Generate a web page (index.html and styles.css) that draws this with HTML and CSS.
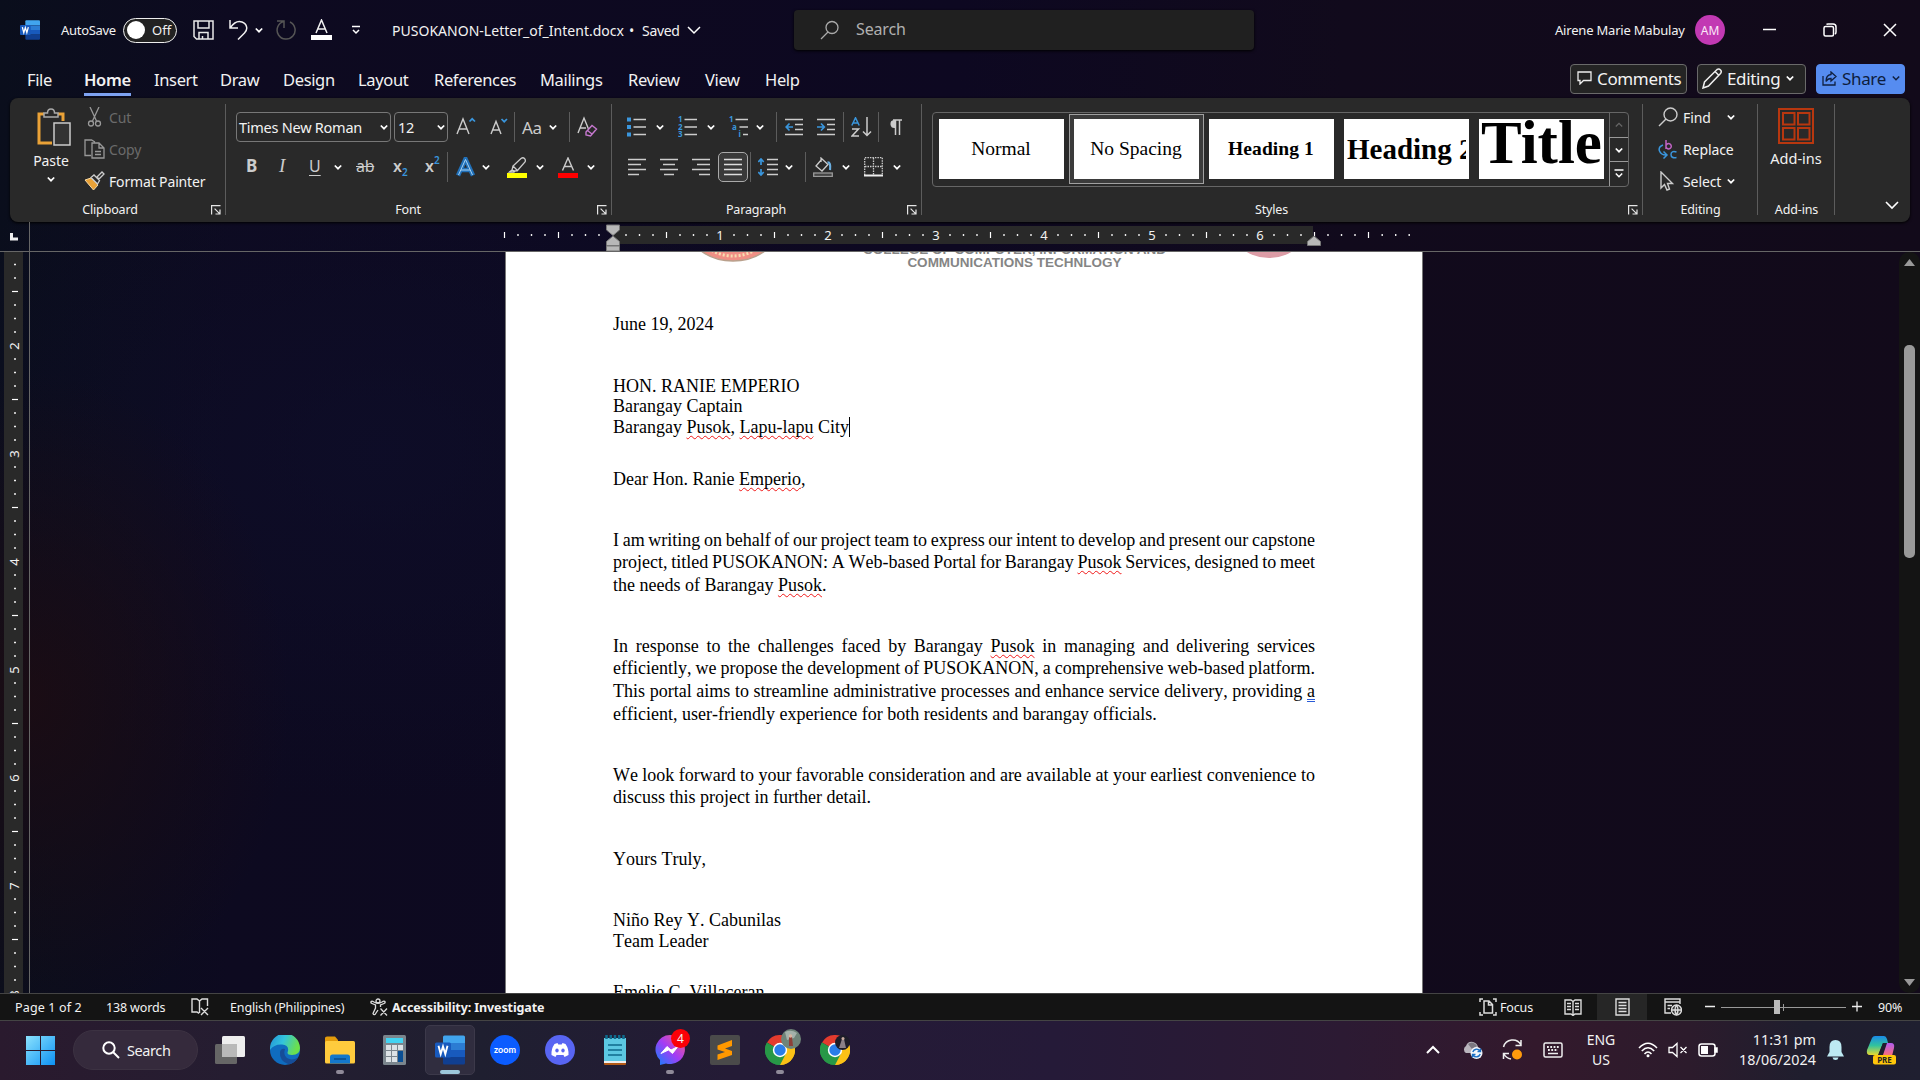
FILE: index.html
```html
<!DOCTYPE html>
<html lang="en">
<head>
<meta charset="utf-8">
<title>PUSOKANON-Letter_of_Intent.docx - Word</title>
<link rel="stylesheet" href="styles.css">
</head>
<body>
<svg width="0" height="0" class="defs">
  <defs>
    <symbol id="chev" viewBox="0 0 10 10"><path d="M1.8 3.5 5 6.700 8.200 3.500" fill="none" stroke="#fff" stroke-width="1.7"/></symbol>
    <symbol id="launch" viewBox="0 0 10 10"><path d="M.6 9.5V.6H9.5M3.6 3.6 8.6 8.6M9 4.5V9H4.5" fill="none" stroke="#e6e6e6" stroke-width="1.2"/></symbol>
    <symbol id="wordlogo" viewBox="0 0 30 30">
      <path d="M8 2a1.5 1.5 0 0 1 1.500-1.500H28.500A1.500 1.500 0 0 1 30 2V8H8z" fill="#41a5ee"/><path d="M8 8H30V15H8z" fill="#2b7cd3"/><path d="M8 15H30V22H8z" fill="#185abd"/><path d="M8 22H30V28a1.500 1.500 0 0 1-1.500 1.500H9.500A1.500 1.500 0 0 1 8 28z" fill="#103f91"/>
      <rect x="0" y="7.500" width="16" height="15" rx="1.500" fill="#185abd"/>
      <path d="M3.500 10.800 5.700 19 8 11.500 10.300 19 12.500 10.800" fill="none" stroke="#fff" stroke-width="1.900"/>
    </symbol>
    <symbol id="chrome" viewBox="0 0 30 30">
      <path d="M15 15 2 7.500A15 15 0 0 1 28 7.500z" fill="#e33b2e"/><path d="M15 15 28 7.500A15 15 0 0 1 15 30z" fill="#fbc116"/><path d="M15 15 15 30A15 15 0 0 1 2 7.500z" fill="#279847"/>
      <path d="M15 8H28.300A15 15 0 0 1 15 30L21 18.500z" fill="#fbc116"/><path d="M2 7.500 8.900 18.500 15 22 21 18.500 15 30A15 15 0 0 1 2 7.500z" fill="#279847"/>
      <circle cx="15" cy="15" r="7.200" fill="#fff"/><circle cx="15" cy="15" r="5.700" fill="#2a7de9"/>
    </symbol>
    <g id="ticks"><path d="M12.800 9h1.400M26.300 9h1.400M39.800 9h1.400M66.800 9h1.400M80.300 9h1.400M93.800 9h1.400" stroke="#eee" stroke-width="2"/><path d="M54 6v6" stroke="#fff" stroke-width="1.200"/></g>
  </defs>
</svg>

<header class="titlebar">
  <div class="quick">
    <svg width="20" height="20"><use href="#wordlogo"/></svg>
    <span class="t13">AutoSave</span>
    <span class="toggle"><i></i>Off</span>
    <svg width="21" height="20" viewBox="0 0 21 20" fill="none" stroke="#e8e8e8" stroke-width="1.500"><path d="M1 1H20V19H3.500L1 16.500zM5 1V8H16V1M6 19V12.500H15V19M9.500 19V16"/></svg>
    <svg width="19" height="20" viewBox="0 0 19 20" fill="none" stroke="#f0f0f0" stroke-width="1.500"><path d="M1 0V8H9M1.500 7.500C5 2.500 9 .5 13 2C18.500 4.200 19 9.500 15.500 13L9 19.500"/></svg>
    <svg width="10" height="10"><use href="#chev"/></svg>
    <svg width="21" height="20" viewBox="0 0 21 20" fill="none" stroke="#555" stroke-width="1.500"><path d="M1 1H8V8M7.500 1.500A9 9 0 1 0 14 2"/></svg>
    <svg width="21" height="22" viewBox="0 0 21 22" fill="none" stroke="#f0f0f0" stroke-width="1.500"><path d="M5 14 10.500 1 16 14M7 10H14"/><path d="M0 18.500H21" stroke="#fff" stroke-width="5"/></svg>
    <svg width="10" height="10" viewBox="0 0 10 10" fill="none" stroke="#fff" stroke-width="1.500"><path d="M1 1.500H9M2 5 5 8 8 5"/></svg>
    <span class="t14 docname">PUSOKANON-Letter_of_Intent.docx</span>
    <span class="t14">•</span>
    <span class="t14 saved">Saved</span>
    <svg width="14" height="10" viewBox="0 0 14 10" fill="none" stroke="#fff" stroke-width="1.500"><path d="M1 2 7 8 13 2"/></svg>
  </div>
  <div class="searchbox">
    <svg width="20" height="20" viewBox="0 0 20 20" fill="none" stroke="#aaa" stroke-width="1.300"><circle cx="12" cy="7.500" r="6"/><path d="M8 12 1 19"/></svg>
    <span>Search</span>
  </div>
  <div class="winctl">
    <span class="user">Airene Marie Mabulay</span>
    <span class="avatar">AM</span>
    <svg width="14" height="14"><path d="M0 6.500H13" stroke="#fff" stroke-width="1.500"/></svg>
    <svg width="14" height="14" viewBox="0 0 14 14" fill="none" stroke="#fff" stroke-width="1.500"><rect x="1" y="3.500" width="9.500" height="9.500" rx="1.500"/><path d="M3.500 1.500Q4 1 5 1H10Q13 1 13 4V9Q13 10.500 12 11"/></svg>
    <svg width="14" height="14" viewBox="0 0 14 14"><path d="M1 1 13 13M13 1 1 13" stroke="#fff" stroke-width="1.500"/></svg>
  </div>
</header>

<nav class="tabs">
  <div class="tablist">
    <span>File</span><span class="active">Home</span><span>Insert</span><span>Draw</span><span>Design</span><span>Layout</span><span>References</span><span>Mailings</span><span>Review</span><span>View</span><span>Help</span>
  </div>
  <div class="tabbtns">
    <span class="tbtn comments"><svg width="15" height="14" viewBox="0 0 15 14" fill="none" stroke="#eee" stroke-width="1.300"><path d="M1 1H14V9.500H6.500L3 13V9.500H1z"/></svg>Comments</span>
    <span class="tbtn editing"><svg width="20" height="21" viewBox="0 0 20 21" fill="none" stroke="#eee" stroke-width="1.500"><path d="M1 20 2.500 14 15 1.500Q17 .5 18.500 2T18.500 5.500L6.500 18zM13 3.500 16.500 7"/></svg>Editing<svg width="10" height="10"><use href="#chev"/></svg></span>
    <span class="tbtn share"><svg width="15" height="15" viewBox="0 0 15 15" fill="none" stroke="#102040" stroke-width="1.300"><path d="M1 5V14H13V10.500M9 1 14 5.500 9 10V7.500Q5.500 7.500 4 10.500Q4 4 9 3.500z"/></svg>Share<svg width="10" height="10" viewBox="0 0 10 10"><path d="M1.800 3.500 5 6.700 8.200 3.500" fill="none" stroke="#102040" stroke-width="1.500"/></svg></span>
  </div>
</nav>

<section class="ribbon">
  <div class="group g-clip">
    <div class="clip">
      <div class="paste">
        <svg width="34" height="38" viewBox="0 0 34 38" fill="none"><path d="M7 6H2V35H15M21 6H26V13" stroke="#eaa237" stroke-width="3"/><path d="M7 9V5H10.500Q10.500 1 14 1T17.500 5H21V9z" stroke="#aaa" stroke-width="1.500" fill="#292929"/><rect x="17" y="15" width="16" height="22" stroke="#ccc" stroke-width="1.500" fill="#333"/></svg>
        <span class="t14">Paste</span>
        <svg width="10" height="10"><use href="#chev"/></svg>
      </div>
      <div class="cliprows">
        <div class="dim"><svg width="21" height="20" viewBox="0 0 21 20" fill="none" stroke="#999" stroke-width="1.300"><path d="M6 0 12.500 14M15 0 8.500 14"/><circle cx="7" cy="16.500" r="2.500"/><circle cx="14" cy="16.500" r="2.500"/></svg>Cut</div>
        <div class="dim"><svg width="21" height="20" viewBox="0 0 21 20" fill="none" stroke="#999" stroke-width="1.300"><path d="M7 16.500H1V1H7.500L11 3M8 4H15L20 9V19H8zM15 4V9H20M11 12.500H17M11 15.500H17"/></svg>Copy</div>
        <div><svg width="21" height="20" viewBox="0 0 21 20" fill="none"><path d="M1 9 7 7 14 14 9.500 19z" fill="#eaa237" stroke="#f6d9a6"/><path d="M7 6.500 10 4 15.500 9.500 13.500 13zM13 6 18 1 20 3 15 8z" stroke="#ccc" stroke-width="1.300" fill="#292929"/></svg>Format Painter</div>
      </div>
    </div>
    <div class="glabel">Clipboard</div><svg class="launch" width="10" height="10"><use href="#launch"/></svg>
  </div>

  <div class="group g-font">
    <div class="row frow1">
      <span class="combo fontname">Times New Roman<svg width="10" height="10"><use href="#chev"/></svg></span>
      <span class="combo">12<svg width="10" height="10"><use href="#chev"/></svg></span>
      <svg width="20" height="20" viewBox="0 0 20 20" fill="none" stroke="#ccc" stroke-width="1.400"><path d="M1 17 7 2 13 17M3 12H11"/><path d="M13.500 4.500 16.200 1.800 19 4.500" stroke="#3a96dd" stroke-width="1.700"/></svg>
      <svg width="20" height="20" viewBox="0 0 20 20" fill="none" stroke="#ccc" stroke-width="1.400"><path d="M1 17 6 4.500 11 17M2.700 13H9.300"/><path d="M11.500 2 14.200 4.700 17 2" stroke="#3a96dd" stroke-width="1.700"/></svg>
      <i class="sep"></i>
      <span class="aa">Aa</span>
      <svg width="10" height="10"><use href="#chev"/></svg>
      <i class="sep"></i>
      <svg width="21" height="22" viewBox="0 0 21 22" fill="none" stroke="#ccc" stroke-width="1.400"><path d="M1 17 7 2 11.500 13M3 12H9"/><path d="M9 16 15 9.500 19.500 13 13.500 20 9 19zM10.500 14.500 15 18" stroke="#c678cf"/></svg>
    </div>
    <div class="row frow2">
      <b class="lt">B</b><em class="lt serif">I</em><span class="lt und">U</span>
      <svg width="10" height="10"><use href="#chev"/></svg>
      <s class="lt strike">ab</s>
      <span class="lt sx">x<sub>2</sub></span><span class="lt sx">x<sup>2</sup></span>
      <i class="sep"></i>
      <svg width="20" height="20" viewBox="0 0 20 20" fill="none"><path d="M2 18.500 9.500 2 17 18.500M5 13H14" stroke="#2170b8" stroke-width="4.500"/><path d="M2.500 18 9.500 2.500 16.500 18M5 13H14" stroke="#a8d4f5" stroke-width="1"/></svg>
      <svg width="10" height="10"><use href="#chev"/></svg>
      <svg width="20" height="21" viewBox="0 0 20 21" fill="none"><path d="M5 13 2.500 15H7L8 14M6 9 10.500 13.500 18 5Q19 3 17.500 1.500T14 1.500zM6 9 5 13 8 14 10.500 13.500" stroke="#ccc" stroke-width="1.300"/><path d="M0 18.500H20" stroke="#ff0" stroke-width="5"/></svg>
      <svg width="10" height="10"><use href="#chev"/></svg>
      <svg width="20" height="21" viewBox="0 0 20 21" fill="none"><path d="M4.500 13.500 10 1 15.500 13.500M6.500 9.500H13.500" stroke="#ccc" stroke-width="1.400"/><path d="M0 18.500H20" stroke="red" stroke-width="5"/></svg>
      <svg width="10" height="10"><use href="#chev"/></svg>
    </div>
    <div class="glabel">Font</div><svg class="launch" width="10" height="10"><use href="#launch"/></svg>
  </div>

  <div class="group g-para">
    <div class="row prow1">
      <svg width="20" height="20" viewBox="0 0 20 20"><path d="M0 2.500H4M0 10H4M0 17.500H4" stroke="#3a96dd" stroke-width="4"/><path d="M6.500 2.500H19M6.500 10H19M6.500 17.500H19" stroke="#ccc" stroke-width="1.700"/></svg>
      <svg width="10" height="10"><use href="#chev"/></svg>
      <svg width="20" height="22" viewBox="0 0 20 22"><path d="M6.500 3.500H19M6.500 11H19M6.500 18.500H19" stroke="#ccc" stroke-width="1.700"/><g class="nums"><text x="0" y="6">1</text><text x="0" y="13.500">2</text><text x="0" y="21">3</text></g></svg>
      <svg width="10" height="10"><use href="#chev"/></svg>
      <svg width="20" height="22" viewBox="0 0 20 22"><path d="M6.500 3.500H19M10.500 11H19M14 18.500H19" stroke="#ccc" stroke-width="1.700"/><g class="nums"><text x="0" y="6">1</text><text x="3" y="13.500">a</text><text x="9.500" y="21">i</text></g></svg>
      <svg width="10" height="10"><use href="#chev"/></svg>
      <i class="sep"></i>
      <svg width="19" height="18" viewBox="0 0 19 18" fill="none"><path d="M0 1.500H18M10 6.500H18M10 11.500H18M0 16.500H18" stroke="#ccc" stroke-width="1.600"/><path d="M8 9H1.500M4.500 5.500 1.200 9 4.500 12.500" stroke="#3a96dd" stroke-width="1.700"/></svg>
      <svg width="19" height="18" viewBox="0 0 19 18" fill="none"><path d="M0 1.500H18M10 6.500H18M10 11.500H18M0 16.500H18" stroke="#ccc" stroke-width="1.600"/><path d="M0 9H7M4 5.500 7.300 9 4 12.500" stroke="#3a96dd" stroke-width="1.700"/></svg>
      <i class="sep"></i>
      <svg width="21" height="20" viewBox="0 0 21 20" fill="none" stroke-width="1.500"><path d="M.8 8.500 4.500.8 8.200 8.500M2 6H7" stroke="#3a96dd"/><path d="M1 12H7.500L1 19H8M16 0V18.500M12 14.500 16 18.500 20 14.500" stroke="#ccc"/></svg>
      <i class="sep"></i>
      <svg width="14" height="17" viewBox="0 0 14 17"><path d="M6 1V9A4 4 0 0 1 5 1z" fill="#ccc"/><path d="M4 1H13M6.500 1V16M10.500 1V16" stroke="#ccc" stroke-width="1.500" fill="none"/></svg>
    </div>
    <div class="row prow2">
      <svg width="18" height="18"><path d="M0 1.500H18M0 6.500H13M0 11.500H18M0 16.500H11" stroke="#ccc" stroke-width="1.600"/></svg>
      <svg width="18" height="18"><path d="M0 1.500H18M3 6.500H15M0 11.500H18M4 16.500H14" stroke="#ccc" stroke-width="1.600"/></svg>
      <svg width="18" height="18"><path d="M0 1.500H18M5 6.500H18M0 11.500H18M7 16.500H18" stroke="#ccc" stroke-width="1.600"/></svg>
      <span class="pressed"><svg width="18" height="18"><path d="M0 1.500H18M0 6.500H18M0 11.500H18M0 16.500H18" stroke="#ddd" stroke-width="1.600"/></svg></span>
      <i class="sep"></i>
      <svg width="20" height="18" viewBox="0 0 20 18" fill="none"><path d="M3 1V7M3 11V17M.3 4 3 1 5.700 4M.3 14 3 17 5.700 14" stroke="#3a96dd" stroke-width="1.700"/><path d="M9 1.500H20M9 6.500H20M9 11.500H20M9 16.500H20" stroke="#ccc" stroke-width="1.600"/></svg>
      <svg width="10" height="10"><use href="#chev"/></svg>
      <i class="sep"></i>
      <svg width="20" height="20" viewBox="0 0 20 20" fill="none" stroke="#ccc" stroke-width="1.300"><path d="M9 2 3 9 9 14 15 7.500 8 1V5"/><path d="M14.500 5.500Q18 5 17 13" stroke="#6aaee0" stroke-width="2.200"/><rect x=".7" y="16" width="18.600" height="3.500" fill="#444" stroke="#999"/></svg>
      <svg width="10" height="10"><use href="#chev"/></svg>
      <svg width="19" height="20" viewBox="0 0 19 20" fill="none" stroke="#ccc" stroke-width="1.300"><path d="M.7 18V.7H18.300V18M9.500 1V18M1 9.500H18" stroke-dasharray="1.500 1"/><path d="M0 18.500H19" stroke="#eee" stroke-width="2"/></svg>
      <svg width="10" height="10"><use href="#chev"/></svg>
    </div>
    <div class="glabel">Paragraph</div><svg class="launch" width="10" height="10"><use href="#launch"/></svg>
  </div>

  <div class="group g-styles">
    <div class="gallery">
      <div class="tiles">
        <div class="cell"><div class="tile">Normal</div></div>
        <div class="cell sel"><div class="tile">No Spacing</div></div>
        <div class="cell"><div class="tile h1">Heading 1</div></div>
        <div class="cell"><div class="tile h2">Heading 2</div></div>
        <div class="cell"><div class="tile ttl">Title</div></div>
      </div>
      <div class="scroller">
        <span><svg width="10" height="10" viewBox="0 0 10 10"><path d="M1.800 6.500 5 3.300 8.200 6.500" fill="none" stroke="#666" stroke-width="1.300"/></svg></span>
        <span><svg width="10" height="10"><use href="#chev"/></svg></span>
        <span><svg width="10" height="10" viewBox="0 0 10 10"><path d="M.5 1H9.500M1.800 4.500 5 7.700 8.200 4.500" fill="none" stroke="#fff" stroke-width="1.500"/></svg></span>
      </div>
    </div>
    <div class="glabel">Styles</div><svg class="launch" width="10" height="10"><use href="#launch"/></svg>
  </div>

  <div class="group g-edit">
    <div class="editrows">
      <div><svg width="20" height="20" viewBox="0 0 20 20" fill="none" stroke="#ccc" stroke-width="1.400"><circle cx="12.500" cy="7.500" r="6.500"/><path d="M8 12 1 19"/></svg><span>Find</span><svg class="fch" width="10" height="10"><use href="#chev"/></svg></div>
      <div><svg width="20" height="20" viewBox="0 0 20 20" fill="none" stroke-width="1.500"><path d="M8 1V10M8 6.500A2.700 2.700 0 1 1 8 8" stroke="#c063c5"/><path d="M5 6Q0 8 1.500 12T8 16M5.500 12.500 9 16 5.500 19.500M18.500 13Q13 11.500 13 15.500T18.500 18.500" stroke="#3a96dd"/></svg><span>Replace</span></div>
      <div><svg width="20" height="20" viewBox="0 0 20 20" fill="none" stroke="#ccc" stroke-width="1.400"><path d="M3 1V17L6.500 13.500 9 19 11.500 18 9.500 12.500H14.500z"/></svg><span>Select</span><svg width="10" height="10"><use href="#chev"/></svg></div>
    </div>
    <div class="glabel">Editing</div>
  </div>

  <div class="group g-add">
    <div class="addins"><svg width="36" height="36" viewBox="0 0 36 36" fill="none" stroke="#b8370f" stroke-width="2"><rect x="1" y="1" width="34" height="34"/><rect x="5" y="5" width="11.500" height="11.500"/><rect x="20" y="5" width="11.500" height="11.500"/><rect x="5" y="20" width="11.500" height="11.500"/><rect x="20" y="20" width="11.500" height="11.500"/></svg><span>Add-ins</span></div>
    <div class="glabel">Add-ins</div>
  </div>
  <div class="collapse"><svg width="14" height="10" viewBox="0 0 14 10" fill="none" stroke="#fff" stroke-width="1.600"><path d="M1 2 7 8 13 2"/></svg></div>
</section>

<div class="hruler">
  <svg class="corner" width="30" height="29"><path d="M11.500 12V19.500M10 18H18" transform="translate(0 -1)" stroke="#eee" stroke-width="3" fill="none"/><path d="M29.500 0V29" stroke="#666"/></svg>
  <svg width="1800" height="29" viewBox="30 222 1800 29">
    <rect x="613" y="226" width="700" height="18" fill="#292929"/>
    <path d="M504.500 232v6M1368.500 232v6" stroke="#fff" stroke-width="1.200"/>
    <use href="#ticks" x="504.500" y="226"/><use href="#ticks" x="612.500" y="226"/><use href="#ticks" x="720.500" y="226"/><use href="#ticks" x="828.500" y="226"/><use href="#ticks" x="936.500" y="226"/><use href="#ticks" x="1044.500" y="226"/><use href="#ticks" x="1152.500" y="226"/><use href="#ticks" x="1260.500" y="226"/>
    <path d="M1381.500 235h1.400M1395 235h1.400M1408.500 235h1.400" stroke="#eee" stroke-width="2"/>
    <g class="rnum"><text x="720" y="240">1</text><text x="828" y="240">2</text><text x="936" y="240">3</text><text x="1044" y="240">4</text><text x="1152" y="240">5</text><text x="1260" y="240">6</text></g>
    <g fill="#b8b8b8" stroke="#777"><path d="M606.500 225H619.500V230L613 235.500 606.500 230z"/><path d="M613 236 619.500 241.500V245.500H606.500V241.500z"/><path d="M606.500 246H619.500V251H606.500z"/><path d="M1314 236 1320.500 241.500V245.500H1307.500V241.500z"/></g>
  </svg>
</div>

<main class="work">
  <div class="vruler">
    <svg width="26" height="741" viewBox="0 252 26 741">
      <rect x="4" y="252" width="19" height="741" fill="#292929"/>
      <g transform="translate(6 0)"><use href="#ticks" transform="translate(18 237.500) rotate(90)"/><use href="#ticks" transform="translate(18 345.500) rotate(90)"/><use href="#ticks" transform="translate(18 453.500) rotate(90)"/><use href="#ticks" transform="translate(18 561.500) rotate(90)"/><use href="#ticks" transform="translate(18 669.500) rotate(90)"/><use href="#ticks" transform="translate(18 777.500) rotate(90)"/><use href="#ticks" transform="translate(18 885.500) rotate(90)"/></g>
      <g class="rnum"><text transform="translate(19 346) rotate(-90)">2</text><text transform="translate(19 454) rotate(-90)">3</text><text transform="translate(19 562) rotate(-90)">4</text><text transform="translate(19 670) rotate(-90)">5</text><text transform="translate(19 778) rotate(-90)">6</text><text transform="translate(19 886) rotate(-90)">7</text><text transform="translate(19 994) rotate(-90)">8</text></g>
    </svg>
  </div>
  <div class="canvas">
    <article class="page">
      <div class="letterhead">
        <svg width="84" height="14" viewBox="0 0 84 14"><ellipse cx="42" cy="-27" rx="46" ry="36" fill="#f08f85" stroke="#b9a08c" stroke-width="1.500"/><ellipse cx="42" cy="-32" rx="40" ry="36" fill="none" stroke="#f7dcb0" stroke-width="3" stroke-dasharray="2 2"/></svg>
        <div class="college"><span>COLLEGE OF COMPUTER, INFORMATION AND</span><span>COMMUNICATIONS TECHNLOGY</span></div>
        <svg width="60" height="14" viewBox="0 0 60 14"><circle cx="30" cy="-38" r="44" fill="#dc9ca6"/></svg>
      </div>
      <p class="date">June 19, 2024</p>
      <p class="to">HON. RANIE EMPERIO<br>Barangay Captain<br>Barangay <u>Pusok</u>, <u>Lapu-lapu</u> City<i class="caret"></i></p>
      <p class="dear">Dear Hon. Ranie <u>Emperio</u>,</p>
      <p class="body p1"><span class="j">I am writing on behalf of our project team to express our intent to develop and present our capstone</span><span class="j">project, titled PUSOKANON: A Web-based Portal for Barangay <u>Pusok</u> Services, designed to meet</span><span>the needs of Barangay <u>Pusok</u>.</span></p>
      <p class="body p2"><span class="j">In response to the challenges faced by Barangay <u>Pusok</u> in managing and delivering services</span><span class="j">efficiently, we propose the development of PUSOKANON, a comprehensive web-based platform.</span><span class="j">This portal aims to streamline administrative processes and enhance service delivery, providing <u class="gram">a</u></span><span>efficient, user-friendly experience for both residents and barangay officials.</span></p>
      <p class="body p3"><span class="j">We look forward to your favorable consideration and are available at your earliest convenience to</span><span>discuss this project in further detail.</span></p>
      <p class="yours">Yours Truly,</p>
      <p class="sign">Niño Rey Y. Cabunilas<br>Team Leader</p>
      <p class="sign2">Emelie C. Villaceran</p>
    </article>
  </div>
  <div class="vscroll">
    <svg width="11" height="7"><path d="M5.500 0 11 7H0z" fill="#999"/></svg>
    <i class="thumb"></i>
    <svg width="11" height="7"><path d="M5.500 7 11 0H0z" fill="#999"/></svg>
  </div>
</main>

<footer class="status">
  <div class="sleft">
    <span class="pages">Page 1 of 2</span><span>138 words</span>
    <svg width="18" height="18" viewBox="0 0 18 18" fill="none" stroke="#ddd" stroke-width="1.400"><path d="M8 15.500 6 14H1V1H6L8.500 3 11 1H16.500V8M8.500 3V15M10 10 17 17M17 10 10 17"/></svg>
    <span>English (Philippines)</span>
    <svg width="18" height="18" viewBox="0 0 18 18" fill="none" stroke="#ddd" stroke-width="1.300"><circle cx="8" cy="3" r="2"/><path d="M1 3.500Q.5 5 2 5.500L5.500 7V10L3 15.500Q3.500 17 5 16.500L8 12M15 3.500Q15.500 5 14 5.500L10.500 7V9M1 3.500Q2 2.500 4 4L6.500 5H9.500L12 4Q14 2.500 15 3.500M10.500 10.500 17 17.500M17 10.500 10.500 17.500"/></svg>
    <b>Accessibility: Investigate</b>
  </div>
  <div class="sright">
    <svg width="18" height="18" viewBox="0 0 18 18" fill="none" stroke="#ddd" stroke-width="1.500"><path d="M4 1H1V4M14 1H17V4M1 14V17H4M17 14V17H14M5 3H10L13.500 6.500V15H5zM9.500 3V7H13.500"/></svg>
    <span>Focus</span>
    <svg width="18" height="17" viewBox="0 0 18 17" fill="none" stroke="#ddd" stroke-width="1.400"><path d="M9 2.500 7 1H1V15H7L9 16.500 11 15H17V1H11zM9 2V16M3 4.500H7M3 7.500H7M3 10.500H7M11 4.500H15M11 7.500H15M11 10.500H15"/></svg>
    <span class="on"><svg width="15" height="18" viewBox="0 0 15 18" fill="none" stroke="#ddd" stroke-width="1.400"><path d="M1 1H14V17H1zM3.500 4.500H11.500M3.500 7.500H11.500M3.500 10.500H11.500M3.500 13.500H11.500"/></svg></span>
    <svg width="18" height="18" viewBox="0 0 18 18" fill="none" stroke="#ddd" stroke-width="1.400"><path d="M7 15H1V1H16V6M1 4H16M3.500 7.500H8M3.500 10.500H6"/><circle cx="12.500" cy="12" r="5" fill="#333"/><path d="M7.500 12H17.500M12.500 7Q9.500 12 12.500 17M12.500 7Q15.500 12 12.500 17"/></svg>
    <svg width="158" height="16" viewBox="0 0 158 16" stroke="#eee"><path d="M0 7.500H10M147 7.500H157M152 2.500V12.500" stroke-width="1.300"/><path d="M16 8.500H141M78.500 5V12" stroke="#999"/><path d="M69 1H75V15H69z" stroke="none" fill="#bbb"/></svg>
    <span>90%</span>
  </div>
</footer>

<div class="taskbar">
  <div class="apps">
    <svg width="29" height="30" viewBox="0 0 29 30"><defs><linearGradient id="win" x1="0" y1="0" x2="1" y2="1"><stop offset="0" stop-color="#8be2fd"/><stop offset="1" stop-color="#0d92f4"/></linearGradient></defs><path d="M0 1H14V15H0zM15 1H29V15H15zM0 16H14V30H0zM15 16H29V30H15z" fill="url(#win)"/></svg>
    <div class="pill"><svg width="18" height="18" viewBox="0 0 18 18" fill="none" stroke="#fff" stroke-width="2"><circle cx="7" cy="7" r="5.700"/><path d="M11 11 17 17"/></svg>Search</div>
    <svg width="30" height="30" viewBox="0 0 30 30"><rect y="9" width="22" height="20" rx="1.500" fill="#666"/><rect x="7" y="1" width="23" height="21" rx="1.500" fill="#eee"/><path d="M7 9H22V22H7z" fill="#b9b9b9"/></svg>
    <svg width="30" height="30" viewBox="0 0 30 30"><defs><linearGradient id="ed" x1="0" y1="0" x2="1" y2=".3"><stop offset="0" stop-color="#2291d8"/><stop offset=".5" stop-color="#33c4dc"/><stop offset="1" stop-color="#6be04c"/></linearGradient></defs><circle cx="15" cy="15" r="15" fill="#0f6cbf"/><path d="M0 14A15 15 0 0 1 30 13Q30 20 22 20 16 20 18 16 19 10 12 9.500 4 9 0 15z" fill="url(#ed)"/><path d="M10 17Q9 26 19 29.500 25 28 28 22.500 22 26 17 23 13 20 15 14 11 13 10 17z" fill="#164d98"/></svg>
    <div class="running"><svg width="30" height="28" viewBox="0 0 30 28"><path d="M0 2Q0 .5 2 .5H10L13 4V8H0z" fill="#e39b0b"/><rect y="5" width="30" height="22.500" rx="1.500" fill="#ffcb3d"/><path d="M5 27.500V21Q5 18.500 7.500 18.500H22.500Q25 18.500 25 21V27.500z" fill="#1478cc"/><path d="M9 23H21" stroke="#0a4d8c" stroke-width="1.500"/></svg></div>
    <svg width="23" height="30" viewBox="0 0 23 30"><rect width="23" height="30" rx="1.500" fill="#7b858d"/><rect x="3" y="3" width="17" height="5" fill="#43d3f2"/><path d="M3 10h5v5H3zM9 10h5v5H9zM15 10h5v5h-5zM3 16h5v5H3zM9 16h5v5H9zM3 22h5v5H3zM9 22h5v5H9z" fill="#dde2e6"/><path d="M15 16h5v11h-5z" fill="#0b4f94"/></svg>
    <div class="wtile"><svg width="30" height="30"><use href="#wordlogo"/></svg></div>
    <svg width="30" height="30" viewBox="0 0 30 30"><circle cx="15" cy="15" r="15" fill="#0b5cff"/><text class="zoomt" x="15" y="18">zoom</text></svg>
    <svg width="30" height="30" viewBox="0 0 30 30"><circle cx="15" cy="15" r="15" fill="#5865f2"/><path d="M9.500 9 12.500 8 13.300 9.500H16.700L17.500 8 20.500 9Q24 14 23.500 20L19.500 22 18.500 20H11.500L10.500 22 6.500 20Q6 14 9.500 9z" fill="#fff"/><ellipse cx="12" cy="15.500" rx="1.700" ry="2" fill="#5865f2"/><ellipse cx="18" cy="15.500" rx="1.700" ry="2" fill="#5865f2"/></svg>
    <svg width="22" height="30" viewBox="0 0 22 30"><rect y="25" width="22" height="5" rx="1" fill="#b35a16"/><path d="M0 24H22V28H0z" fill="#eee"/><path d="M0 3H22V26H0z" fill="#5cc8e2"/><path d="M4 10H18M4 15H18M4 20H18" stroke="#0e6a8c" stroke-width="1.700"/><path d="M2.500 0V4M6.800 0V4M11 0V4M15.200 0V4M19.500 0V4" stroke="#0e6a8c" stroke-width="2.500" stroke-dasharray="4"/></svg>
    <div class="running"><svg width="30" height="30" viewBox="0 0 30 30"><defs><linearGradient id="ms" x1="0" y1="1" x2="1" y2="0"><stop offset="0" stop-color="#0a84ff"/><stop offset=".5" stop-color="#a43cf5"/><stop offset="1" stop-color="#ff5f78"/></linearGradient></defs><path d="M15 0A15 14.500 0 1 1 11 28.500L5 30V25A14.500 14.500 0 0 1 15 0z" fill="url(#ms)"/><path d="M6 18.500 12 11.500 16 15 23 11.500 17.500 18.500 13.500 15z" fill="#fff" stroke="#fff"/></svg><b class="badge">4</b></div>
    <svg width="30" height="30" viewBox="0 0 30 30"><rect width="30" height="30" rx="2" fill="#4a4a4a"/><path d="M7.500 10.500 22 5V11L15 13.500 22 16V20L7.500 25V19.500L15 17 7.500 14.500z" fill="#ff9800"/></svg>
    <div class="running"><svg class="person" width="36" height="30" viewBox="0 0 36 30"><use href="#chrome" width="30" height="30"/><circle cx="26" cy="4" r="10" fill="#6f8479"/><path d="M20 -3Q26 -6 32 -2L29 3 22 5z" fill="#a4b1aa"/><path d="M24 2H27L28 11H24z" fill="#8d4038"/><circle cx="25.500" cy="1" r="1.800" fill="#d8b4a0"/></svg></div>
    <svg class="person" width="30" height="30" viewBox="0 0 30 30"><use href="#chrome" width="30" height="30"/><circle cx="22.500" cy="7.500" r="7.500" fill="#1d1d29"/><path d="M22 4H24L26 13H19z" fill="#8a8087"/><circle cx="23" cy="3.500" r="1.500" fill="#c9aca0"/></svg>
  </div>
  <div class="tray">
    <svg width="14" height="10" viewBox="0 0 14 10" fill="none" stroke="#fff" stroke-width="2"><path d="M1 8 7 2 13 8"/></svg>
    <svg width="21" height="20" viewBox="0 0 21 20"><path d="M4 13A4 4 0 0 1 4 6Q6 1 11 2 15 3 16 7L17 13z" fill="#b9b5bd"/><path d="M6 4Q11 0 15 6L10 9z" fill="#7b7780"/><circle cx="14.500" cy="13" r="6" fill="#f3f6fa"/><path d="M10.800 12A4 4 0 0 1 18 11M18.200 14A4 4 0 0 1 11 15M18.500 8.500V11.500H15.500M10.500 17.500V14.500H13.500" fill="none" stroke="#1a6fc4" stroke-width="1.400"/></svg>
    <svg width="21" height="21" viewBox="0 0 21 21" fill="none" stroke="#eee" stroke-width="1.500"><path d="M1.500 8A9.500 9.500 0 0 1 19 6M19 1V6.500H13.500M9 20Q4 19 2 15M1.500 20V14.500H7"/><circle cx="15" cy="15.500" r="5" fill="#ff9a0d" stroke="none"/></svg>
    <svg width="20" height="16" viewBox="0 0 20 16" fill="none" stroke="#eee" stroke-width="1.500"><rect x="1" y="1" width="18" height="14" rx="1.500"/><path d="M4 5H16M5 8H15" stroke-width="1.800" stroke-dasharray="1.800 1.500"/><path d="M5 11.500H15"/></svg>
    <div class="lang">ENG<br>US</div>
    <svg width="20" height="16" viewBox="0 0 20 16" fill="none" stroke="#fff" stroke-width="1.500"><path d="M1 6Q10 -3.500 19 6M3.800 9Q10 2.500 16.200 9M6.500 12Q10 8 13.500 12"/><circle cx="10" cy="13.800" r="1.500" fill="#fff" stroke="none"/></svg>
    <svg width="20" height="16" viewBox="0 0 20 16" fill="none" stroke="#fff" stroke-width="1.300"><path d="M1 5.500H4.500L9 1.500V14.500L4.500 10.500H1zM12.500 5 18.500 11M18.500 5 12.500 11"/></svg>
    <svg width="21" height="14" viewBox="0 0 21 14" fill="none" stroke="#fff" stroke-width="1.500"><rect x="1" y="1" width="16" height="12" rx="2.500"/><path d="M3 3H10V11H3z" fill="#fff" stroke="none"/><path d="M17 5H19V9H17z" fill="#fff"/></svg>
    <div class="clock">11:31 pm<br>18/06/2024</div>
    <svg width="17" height="20" viewBox="0 0 17 20"><path d="M8.500 0Q14.500 0 14.500 7V12L17 16.500H0L2.500 12V7Q2.500 0 8.500 0zM5.500 17.500H11.500Q11 20 8.500 20T5.500 17.500z" fill="#bdeaf3"/></svg>
    <svg width="30" height="30" viewBox="0 0 30 30"><defs><linearGradient id="c1" x1="0" y1="0" x2="0" y2="1"><stop offset="0" stop-color="#1a8be8"/><stop offset=".5" stop-color="#31c39d"/><stop offset="1" stop-color="#e8d930"/></linearGradient><linearGradient id="c2" x1="0" y1="0" x2="0" y2="1"><stop offset="0" stop-color="#b05cf0"/><stop offset="1" stop-color="#ff6f72"/></linearGradient></defs><path d="M6 3Q7 1 9 1H18Q20 1 21 4L22 8H17L12 20H4Q0 20 1 15z" fill="url(#c1)"/><path d="M18 8H25Q29 8 28 13L26 21H13z" fill="url(#c2)"/><path d="M17 8 12.500 20H17L21 8z" fill="#1f1e2e"/><rect x="7" y="20" width="23" height="9.500" rx="2" fill="#ffc60a"/><text class="pre" x="18.500" y="27.800">PRE</text></svg>
  </div>
</div>
</body>
</html>
```
FILE: styles.css
```css
* { box-sizing: border-box; }
body {
  margin: 0; width: 1920px; height: 1080px; overflow: hidden;
  display: flex; flex-direction: column;
  font-family: "Noto Sans", "Open Sans", sans-serif; font-size: 13px; color: #f2f2f2;
  background:
    radial-gradient(ellipse 260px 330px at 30px 700px, rgba(30, 12, 18, .8), transparent),
    radial-gradient(ellipse 500px 350px at 380px 450px, rgba(14, 14, 42, .7), transparent),
    linear-gradient(90deg, #0a0e1c 0, #0d0a20 12%, #0d0821 50%, #110a1c 70%, #120a1a 100%);
}
svg { display: block; flex: none; }
.defs { position: absolute; }
.t13 { font-size: 13px; letter-spacing: -.3px; }
.t14 { font-size: 14px; letter-spacing: -.3px; }
.docname { letter-spacing: .02px; }

.titlebar { height: 60px; flex: none; display: flex; align-items: center; }
.quick {
  display: grid; align-items: center; width: 794px; padding-left: 20px;
  grid-template-columns: 41px 62px 70px 36px 25px 22px 35px 40px 41px 237px 13px 45px 20px;
}
.quick, .winctl, .searchbox { white-space: nowrap; }
.toggle {
  width: 54px; height: 25px; border: 1.5px solid #eee; border-radius: 13px; background: #222;
  display: flex; align-items: center; font-size: 13px; padding-left: 3px; gap: 7px;
}
.toggle i { width: 18px; height: 18px; border-radius: 50%; background: #fff; }
.searchbox {
  width: 460px; height: 40px; background: #202020; border-radius: 4px; box-shadow: 0 1px 3px #000;
  display: flex; align-items: center; padding-left: 26px; gap: 16px; color: #b0b0b0; font-size: 16px; letter-spacing: -.15px; line-height: 38px;
}
.searchbox span { margin-top: -2px; }
.winctl {
  margin-left: auto; width: 365px; display: grid; align-items: center;
  grid-template-columns: 140px 68px 60px 60px 20px;
}
.user { font-size: 13px; letter-spacing: -.2px; }
.avatar {
  width: 30px; height: 30px; border-radius: 50%; background: #c239b3; color: #fbe8f8;
  display: flex; align-items: center; justify-content: center; font-size: 12px;
}

.tabs { height: 38px; flex: none; display: flex; }
.tablist {
  width: 1570px; padding-left: 27px; display: grid; font-size: 16.500px; letter-spacing: -.35px;
  grid-template-columns: 57px 70px 66px 63px 75px 76px 106px 88px 77px 60px 40px;
}
.tablist span { height: 36px; line-height: 39px; justify-self: start; white-space: nowrap; }
.tablist .active { font-weight: 600; border-bottom: 3px solid #7da2f2; letter-spacing: -.35px; }
.tabbtns { display: flex; gap: 10px; padding-top: 4px; }
.tbtn {
  height: 30px; border: 1px solid #6a6a6a; border-radius: 4px; background: #242424; display: flex; align-items: center;
  font-size: 17px; letter-spacing: -.35px; gap: 5px; padding: 0 0 2px 6px; white-space: nowrap;
}
.comments { width: 117px; }
.editing { width: 109px; padding-left: 4px; }
.share { width: 89px; background: #568cf0; border-color: #568cf0; color: #0d1d3d; padding-left: 5px; }

.ribbon {
  width: 1900px; height: 124px; flex: none; margin-left: 10px; background: #292929; border-radius: 8px;
  display: flex; box-shadow: 0 1px 3px #000;
}
.group { position: relative; height: 124px; padding-top: 14px; display: flex; flex-direction: column; }
.group::after { content: ""; position: absolute; right: 0; top: 6px; width: 1px; height: 111px; background: #5c5c5c; }
.g-clip { width: 216px; padding-top: 3px; }
.g-font { width: 386px; }
.g-para { width: 310px; }
.g-styles { width: 721px; }
.g-edit { width: 115px; padding-top: 3px; }
.g-add { width: 77px; }
.glabel {
  position: absolute; left: 0; right: 0; bottom: 2px; text-align: center; font-size: 12.500px; letter-spacing: -.15px; line-height: 20px;
}
.g-clip .glabel { right: 16px; }
.g-font .glabel { right: 22px; }
.g-para .glabel { right: 22px; }
.g-styles .glabel { right: 22px; }
.launch { position: absolute; right: 5px; bottom: 7px; }
.clip { display: flex; }
.paste { width: 74px; padding: 7px 0 0 8px; display: flex; flex-direction: column; align-items: center; gap: 4px; }
.paste svg:first-child { margin-left: 6px; }
.paste .t14 { line-height: 22px; letter-spacing: -.1px; }
.paste svg:last-child { margin-top: -2px; }
.cliprows div { height: 32px; display: flex; align-items: center; gap: 4px; font-size: 14px; letter-spacing: -.15px; white-space: nowrap; }
.cliprows .dim { color: #6b6b6b; }

.row { display: grid; height: 30px; align-items: center; margin-bottom: 10px; }
.frow1 { padding-left: 10px; grid-template-columns: 158px 62px 34px 24px 8px 26px 21px 8px 20px; }
.frow2 { padding-left: 20px; grid-template-columns: 33px 30px 24px 23px 38px 32px 21px 9px 25px 26px 28px 23px 28px 10px; }
.prow1 { padding-left: 15px; grid-template-columns: 28px 23px 28px 23px 26px 21px 9px 32px 26px 8px 27px 11px 16px; }
.prow2 { padding-left: 16px; grid-template-columns: 32px 32px 26px 32px 8px 26px 21px 8px 28px 23px 28px 10px; }
.sep { width: 1px; height: 30px; background: #5c5c5c; }
.combo {
  height: 30px; border: 1px solid #777; border-radius: 4px; display: flex; align-items: center; justify-content: space-between;
  padding: 0 1px 0 3px; font-size: 14.500px; width: 54px; white-space: nowrap; letter-spacing: -.25px;
}
.fontname { width: 155px; padding-left: 2px; }
.aa { font-size: 17px; color: #ccc; letter-spacing: -.3px; }
.lt { font-size: 17px; color: #ccc; line-height: 28px; height: 30px; }
.serif { font-family: "Liberation Serif", serif; font-size: 19px; }
.und { text-decoration: underline; text-underline-offset: 3px; font-size: 16px; }
.strike { font-size: 16px; letter-spacing: -.3px; }
.sx { font-size: 16px; font-weight: 600; white-space: nowrap; margin-left: -1px; }
.sx sub, .sx sup { color: #3a96dd; font-size: 10px; line-height: 0; }
.sx sup { vertical-align: 8px; }
.nums { font: bold 8px "Noto Sans", sans-serif; fill: #3a96dd; }
.pressed { width: 30px; height: 30px; border: 1px solid #aaa; border-radius: 5px; background: #3a3a3a; display: flex; align-items: center; justify-content: center; }

.gallery { margin-left: 10px; width: 697px; height: 75px; border: 1px solid #666; border-radius: 4px; display: flex; }
.tiles { display: flex; padding: 1px 0 0 1px; width: 677px; }
.cell { width: 135px; height: 70px; padding: 5px; flex: none; }
.sel { border: 1px solid #a0a0a0; background: #3b3b3b; padding: 4px; }
.tile {
  width: 125px; height: 60px; background: #fff; color: #000; overflow: hidden; white-space: nowrap; text-align: center;
  font: 19.500px/60px "Liberation Serif", "Times New Roman", serif;
}
.tile { padding-right: 1px; }
.h1 { font-weight: bold; letter-spacing: .1px; }
.h2 { font-weight: bold; font-size: 29px; text-align: left; border: 0 solid #fff; border-width: 0 3px; padding: 0; }
.ttl { font-weight: bold; font-size: 61px; line-height: 47px; padding: 0; }
.scroller { width: 19px; flex: none; display: flex; flex-direction: column; }
.scroller span { flex: 1; display: flex; align-items: center; justify-content: center; border-left: 1px solid #999; border-top: 1px solid #999; }
.scroller span:first-child { border-color: #666; border-top: 0; }

.editrows div { height: 32px; display: flex; align-items: center; padding-left: 15px; gap: 5px; font-size: 14px; letter-spacing: -.1px; }
.editrows .fch { margin-left: 10px; }
.addins { display: flex; flex-direction: column; align-items: center; margin: -4px 1px 0 0; gap: 2px; font-size: 14.500px; letter-spacing: 0; line-height: 24px; }
.collapse { display: flex; padding: 102px 0 0 50px; }

.hruler { height: 30px; flex: none; display: flex; border-bottom: 1px solid #666; }
.rnum { font: 13px "Noto Sans", sans-serif; fill: #f2f2f2; text-anchor: middle; }
.work { height: 741px; flex: none; display: flex; }
.vruler { width: 30px; border-right: 1px solid #666; }
.canvas { width: 1869px; padding-left: 475px; overflow: hidden; }
.page {
  width: 918px; height: 741px; background: #fff; color: #000; border: 0 solid #777; border-width: 0 1px; padding: 0 106px 0 107px; overflow: hidden;
  font: 18px/20.700px "Liberation Serif", "Times New Roman", serif; font-kerning: none;
}
.page p { margin: 0; white-space: nowrap; }
.letterhead { height: 61.900px; margin: 0 0 0 78px; display: flex; justify-content: space-between; width: 608px; }
.college { width: 340px; margin-left: 15px; margin-top: -9px; display: flex; flex-direction: column; align-items: center; font: bold 13.500px/13px "Liberation Sans", Arial, sans-serif; color: #858585; white-space: nowrap; }
.page .to { margin-top: 41.100px; }
.page .dear { margin-top: 31.100px; }
.page .body { line-height: 22.600px; }
.page .body span { display: block; height: 22.600px; }
.page .body .j { width: 702px; text-align: justify; text-align-last: justify; word-spacing: -1.200px; }
.page .p1 { margin-top: 39.300px; }
.page .p2 { margin-top: 38.200px; }
.page .p3 { margin-top: 38.600px; }
.page .yours { margin-top: 39.800px; }
.page .sign { margin-top: 40.300px; }
.page .sign2 { margin-top: 30.300px; }
.page u { text-decoration: underline wavy #f01818 1.200px; text-underline-offset: 1.500px; text-decoration-skip-ink: none; }
.page .gram { text-decoration: underline double #2a5bd7 1px; }
.caret { display: inline-block; width: 1px; height: 20px; background: #000; vertical-align: -4px; }
.vscroll {
  width: 21px; flex: none; background: #141414; border-radius: 10px; display: flex; flex-direction: column; align-items: center; padding: 7px 0;
}
.thumb { width: 11px; height: 213px; border-radius: 5px; background: #999; margin: 79px 0 auto; }

.status {
  height: 28px; flex: none; background: #141414; border: 1px solid #444; border-width: 1px 0; display: flex; justify-content: space-between;
  font-size: 12.500px; letter-spacing: -.15px; white-space: nowrap;
}
.sleft, .sright { display: grid; align-items: center; }
.sleft { padding-left: 15px; grid-template-columns: 91px 85px 39px 140px 22px 160px; }
.pages { letter-spacing: .15px; }
.sright { width: 441px; grid-template-columns: 21px 64px 33px 67px 41px 173px 42px; }
.on { width: 50px; height: 26px; background: #262626; display: flex; align-items: center; justify-content: center; }
.sleft b { font-weight: 700; letter-spacing: -.1px; }

.taskbar {
  height: 59px; flex: none; display: flex; justify-content: space-between; white-space: nowrap; padding-bottom: 2px;
  background: linear-gradient(90deg, #2a1a2e 0, #251d31 12%, #1f1f30 25%, #241b36 38%, #251a38 55%, #2c1a33 70%, #33192c 80%, #2c1b2c 88%, #1f1e2e 94%, #1f1f30 100%);
}
.apps { display: grid; align-items: center; padding-left: 26px; grid-template-columns: 47px 142px 55px 55px 58px 42px 65px 55px 59px 51px 55px 55px 55px 40px; }
.pill {
  width: 125px; height: 40px; border-radius: 20px; background: #352a3c; border: 1px solid #3c3242; display: flex; align-items: center; gap: 7px; padding-left: 28px; font-size: 14.500px; letter-spacing: -.4px;
}
.person { overflow: visible; }
.wtile { position: relative; width: 50px; height: 50px; border-radius: 5px; background: #302d3f; border: 1px solid #3c394a; display: flex; align-items: center; justify-content: center; }
.wtile::after { content: ""; position: absolute; left: 14px; bottom: 0; width: 20px; height: 4px; border-radius: 2px; background: #9cc7da; }
.zoomt { font: bold 9px Lato, "Noto Sans", sans-serif; fill: #fff; text-anchor: middle; }
.running { position: relative; height: 30px; display: flex; align-items: center; }
.running::after { content: ""; position: absolute; left: 11px; bottom: -9px; width: 8px; height: 4px; border-radius: 2px; background: #8f8a99; }
.badge {
  position: absolute; left: 16px; top: -6px; width: 19px; height: 19px; border-radius: 50%; background: #fb0007; font-weight: 400; font-size: 12px; line-height: 19px; text-align: center;
}
.tray { width: 494px; display: grid; align-items: center; grid-template-columns: 36px 40px 41px 38px 57px 30px 30px 31px 98px 39px 40px; }
.lang { width: 40px; text-align: center; font-size: 14px; line-height: 20px; letter-spacing: 0; }
.clock { width: 87px; text-align: right; font-size: 14.300px; line-height: 20px; letter-spacing: .1px; }
.pre { font: bold 8px "Noto Sans", sans-serif; fill: #222; text-anchor: middle; }
```
